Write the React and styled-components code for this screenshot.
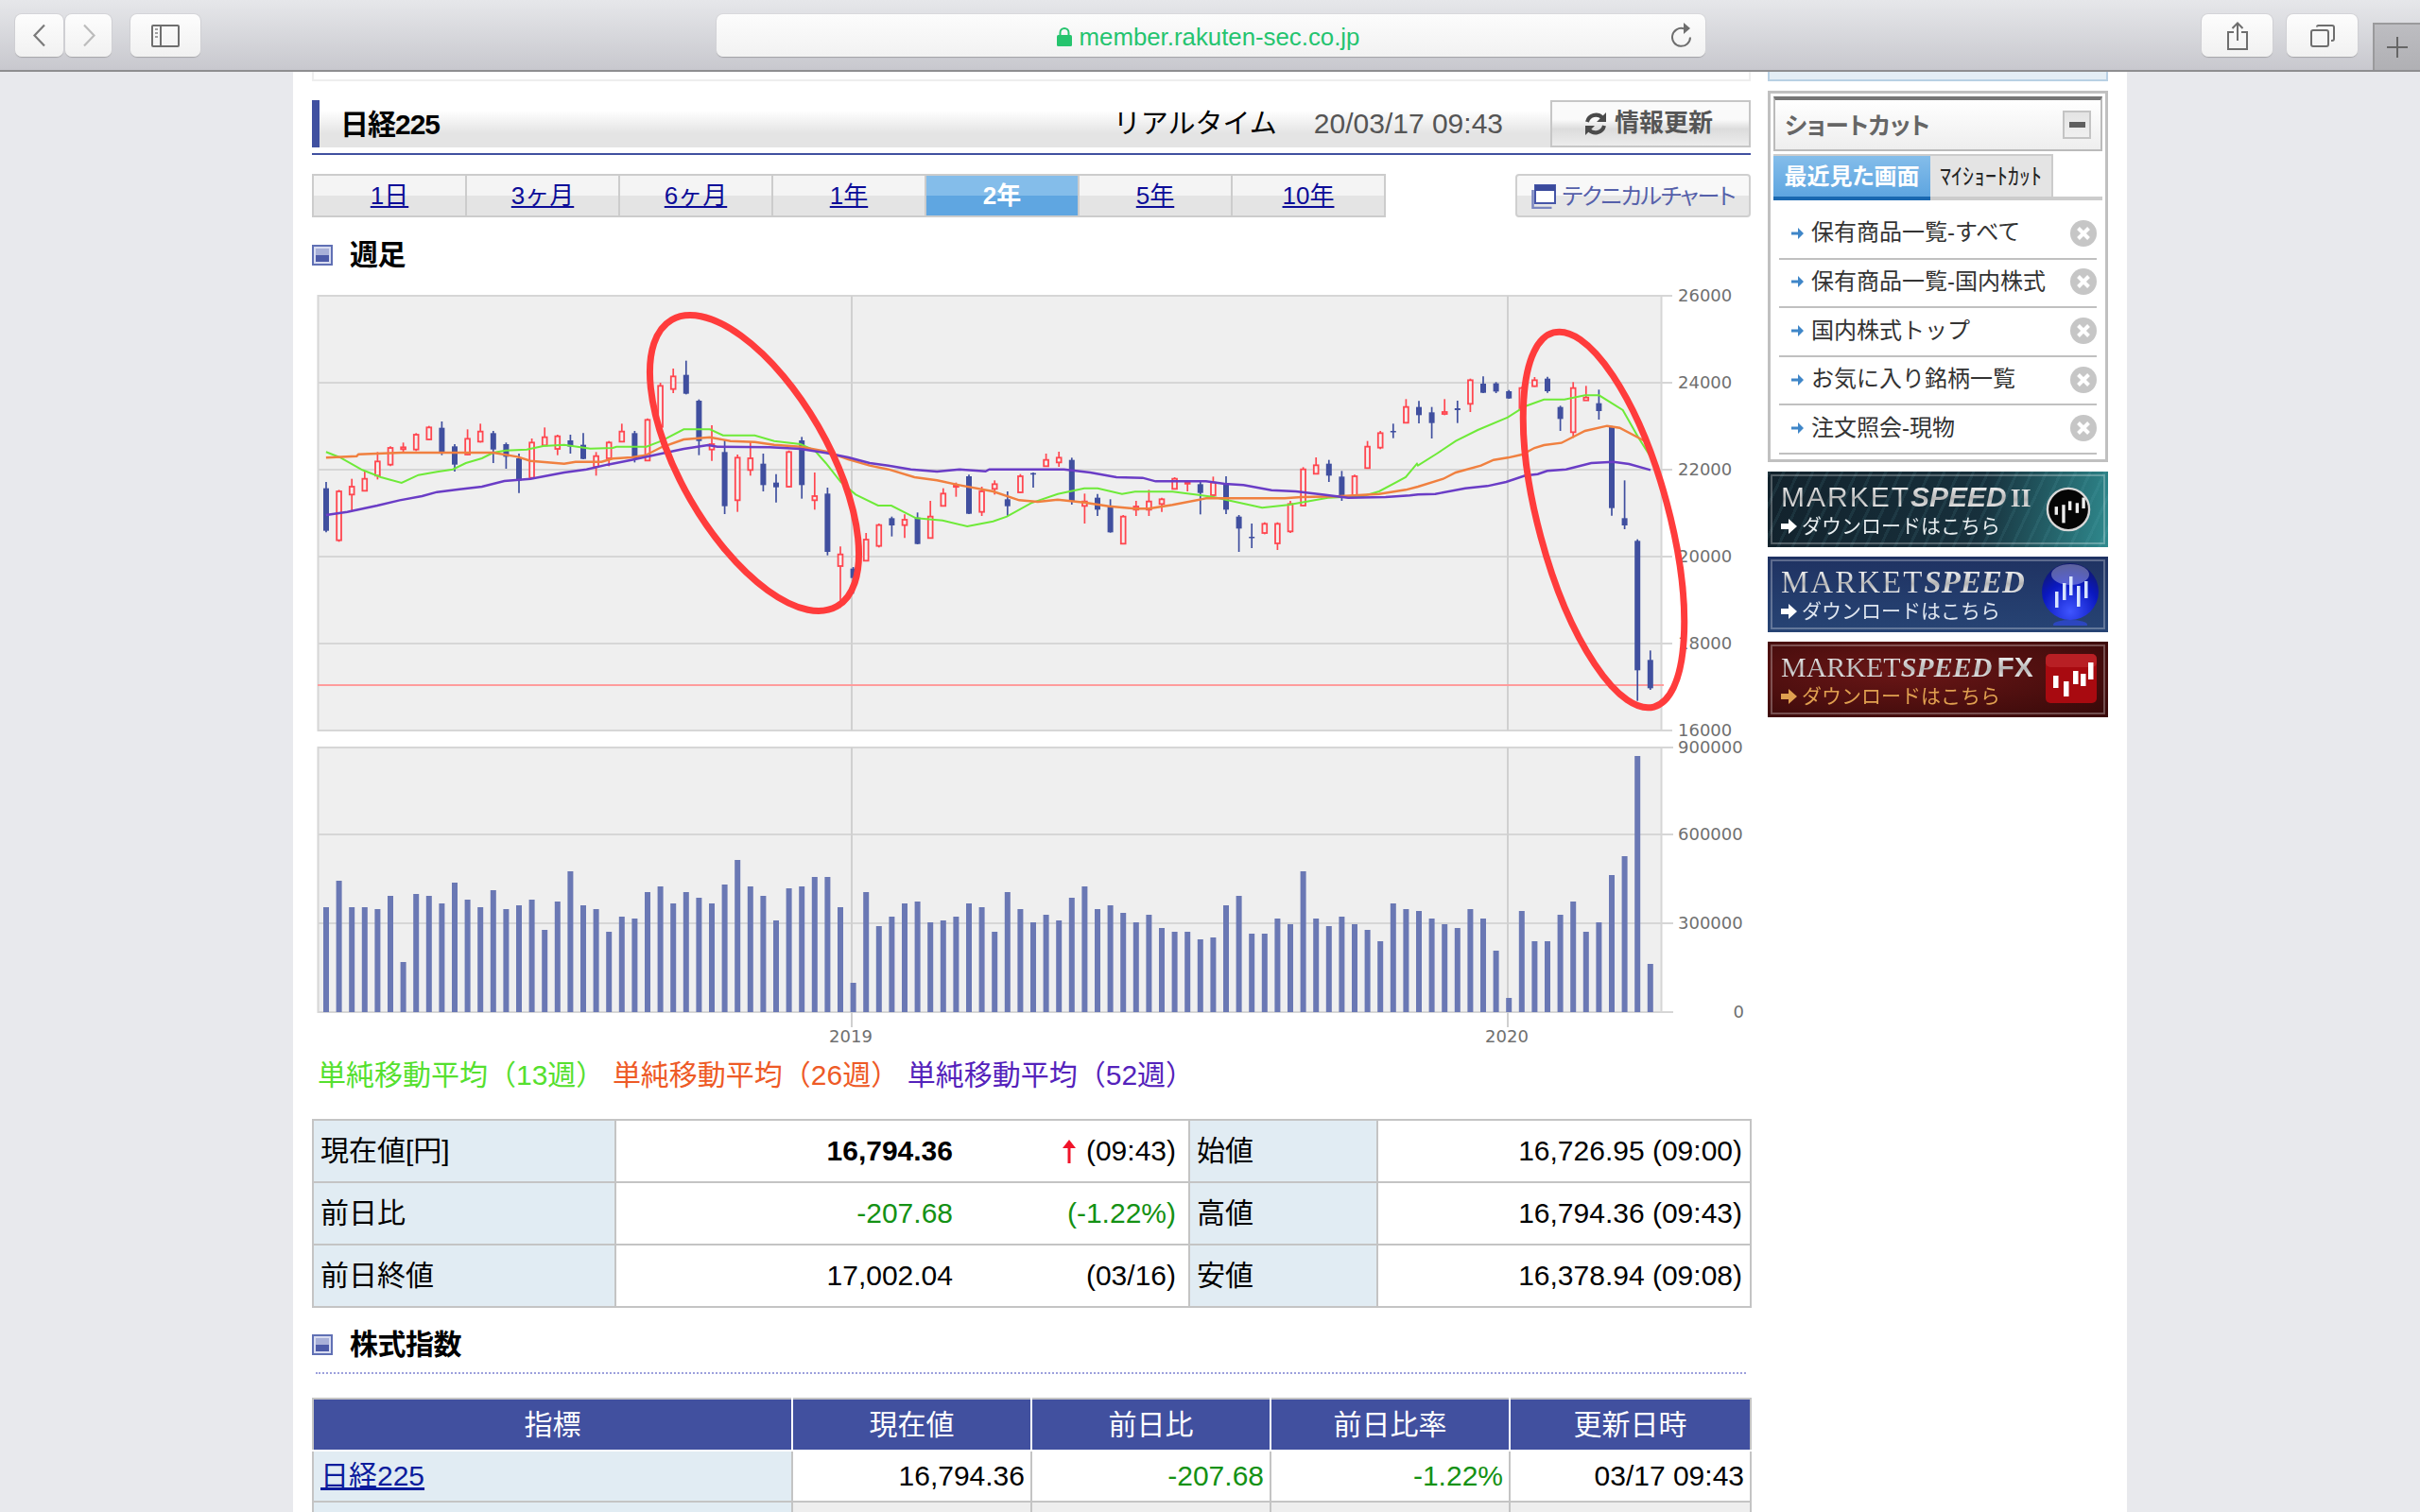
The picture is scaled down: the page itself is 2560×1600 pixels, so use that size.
import React from "react";
import styled, { createGlobalStyle } from "styled-components";

const SANS = `"Liberation Sans", "Noto Sans CJK JP", sans-serif`;

const Global = createGlobalStyle`
  html, body { margin: 0; padding: 0; height: 1600px; overflow: hidden; background: #e8e9ed; }
  body { font-family: ${SANS}; color: #000; line-height: 1.2; }
  * { box-sizing: border-box; }
`;

/* ---------- browser chrome ---------- */
const Toolbar = styled.header`
  height: 76px;
  display: grid;
  grid-template-columns: 758px 1046px 1fr;
  background: linear-gradient(#e6e7ea, #c8c8ce);
  border-bottom: 2px solid #8e8e90;
`;
const NavGroup = styled.div`
  display: flex;
  padding: 15px 0 0 16px;
  height: 60px;
`;
const ChromeButton = styled.button`
  width: ${(p) => p.$w}px;
  height: 45px;
  margin-left: ${(p) => p.$ml || 0}px;
  padding: 0;
  display: flex;
  align-items: center;
  justify-content: center;
  background: linear-gradient(#fdfdfd, #f1f1f1);
  border: 0;
  border-radius: 7px;
  box-shadow: 0 1px 1px #a5a5a8, 0 0 0 1px #d4d4d8;
`;
const AddressBar = styled.div`
  height: 45px;
  margin-top: 15px;
  display: grid;
  grid-template-columns: 1fr auto 1fr;
  align-items: center;
  padding-right: 12px;
  background: linear-gradient(#fcfcfc, #f2f2f2);
  border-radius: 7px;
  box-shadow: 0 1px 1px #a0a0a4, 0 0 0 1px #d8d8dc;
`;
const Url = styled.div`
  grid-column: 2;
  display: flex;
  align-items: center;
  gap: 8px;
  padding: 3px 0 0 6px;
  font-size: 25.8px;
  color: #24c46f;
  font-family: "Liberation Sans", sans-serif;
`;
const Reload = styled.div`
  justify-self: end;
  display: flex;
`;
const ChromeRight = styled.div`
  display: flex;
  padding: 15px 0 0 525px;
  height: 74px;
`;
const PlusTab = styled.div`
  width: 50px;
  height: 50px;
  margin: 9px 0 0 16px;
  display: flex;
  align-items: center;
  justify-content: center;
  background: linear-gradient(#bdbdc1, #b0b0b4);
  border-left: 2px solid #9a9a9c;
  border-top: 2px solid #9a9a9c;
`;

/* ---------- page frame ---------- */
const Sheet = styled.main`
  width: 1940px;
  height: 1524px;
  margin: 0 auto;
  padding: 0 20px;
  display: flex;
  gap: 18px;
  background: #fff;
  overflow: hidden;
`;
const MainColumn = styled.div`
  width: 1522px;
  flex: none;
`;
const SideColumn = styled.aside`
  width: 360px;
  flex: none;
`;
const TopStrip = styled.div`
  height: 10px;
  border: 2px solid #eee;
  border-top: 0;
`;

/* ---------- heading bar ---------- */
const TitleBar = styled.div`
  margin-top: 20px;
  height: 50px;
  display: flex;
  align-items: center;
  padding-left: 22px;
  border-left: 8px solid #4050a0;
  background: linear-gradient(#fff 22%, #e4e4e4 70%);
`;
const PageTitle = styled.h1`
  margin: 0;
  padding-top: 2px;
  font-size: 30px;
  font-weight: 700;
  letter-spacing: -1px;
`;
const Realtime = styled.span`
  margin-left: auto;
  font-size: 29px;
`;
const Stamp = styled.span`
  margin-left: 39px;
  font-size: 30px;
  color: #555;
`;
const UpdateButton = styled.button`
  width: 212px;
  height: 50px;
  margin-left: 50px;
  padding: 0 6px 0 0;
  display: flex;
  align-items: center;
  justify-content: center;
  gap: 6px;
  font: 700 26px/1.2 ${SANS};
  color: #555;
  border: 2px solid #c6c6c6;
  background: linear-gradient(#fafafa 40%, #dcdcdc 62%, #ececec);
`;
const TitleRule = styled.div`
  margin-top: 6px;
  height: 2px;
  background: #4050a0;
`;

/* ---------- period tabs ---------- */
const TabRow = styled.div`
  margin-top: 20px;
  display: flex;
  justify-content: space-between;
`;
const PeriodTabs = styled.nav`
  width: 1136px;
  height: 46px;
  display: flex;
  border: 2px solid #ccc;
`;
const PeriodTab = styled.a`
  flex: 1;
  display: flex;
  align-items: center;
  justify-content: center;
  padding-top: 2px;
  font-size: 26px;
  font-weight: ${(p) => (p.$active ? 700 : 400)};
  color: ${(p) => (p.$active ? "#fff" : "#0c0c98")};
  text-decoration: ${(p) => (p.$active ? "none" : "underline")};
  border-right: 2px solid #ccc;
  background: ${(p) =>
    p.$active
      ? "linear-gradient(#84bdea 50%, #5fa6e1 50%)"
      : "linear-gradient(#f4f4f4 50%, #e4e4e4 50%)"};
  &:last-child { border-right: 0; }
`;
const TechButton = styled.a`
  width: 249px;
  height: 46px;
  display: flex;
  align-items: center;
  justify-content: center;
  gap: 7px;
  padding-top: 2px;
  font-size: 24px;
  font-feature-settings: "palt";
  letter-spacing: -1.2px;
  color: #5560aa;
  border: 2px solid #cfcfcf;
  border-radius: 4px;
  background: linear-gradient(#f8f8f8 50%, #e6e6e6 50%);
`;

/* ---------- section heading ---------- */
const Section = styled.div`
  display: flex;
  align-items: center;
  gap: 18px;
  height: ${(p) => p.$h}px;
  margin-top: ${(p) => p.$mt}px;
`;
const SectionMark = styled.i`
  width: 22px;
  height: 22px;
  flex: none;
  border: 2px solid #6070b4;
  box-shadow: inset 0 0 0 2px #d8dcf0;
  background: linear-gradient(#a8b0d8 50%, #4c5aa8 50%);
`;
const SectionTitle = styled.h2`
  margin: 0;
  font-size: 30px;
  font-weight: 700;
  letter-spacing: -0.5px;
`;

/* ---------- chart ---------- */
const ChartSvg = styled.svg`
  display: block;
  width: 1522px;
  height: 810px;
  margin-top: 10px;
`;
const Legend = styled.div`
  height: 50px;
  padding: 5px 0 0 6px;
  display: flex;
  align-items: center;
  gap: 8.5px;
  font-size: 30px;
`;
const LegendItem = styled.span`
  color: ${(p) => p.$c};
`;

/* ---------- quote table ---------- */
const QuoteTable = styled.table`
  width: 1521px;
  margin-top: 24px;
  table-layout: fixed;
  border-collapse: collapse;
  font-size: 30px;
`;
const Cell = styled.td`
  height: 66px;
  padding: 0 8px 0 7px;
  border: 2px solid #c4c4c4;
  text-align: ${(p) => (p.$label ? "left" : "right")};
  background: ${(p) => (p.$label ? "#e1ecf3" : "#fff")};
  color: ${(p) => (p.$green ? "#149114" : "#000")};
`;
const PairCell = styled(Cell)`
  padding: 0 13px 0 0;
`;
const Pair = styled.div`
  display: flex;
  justify-content: flex-end;
  align-items: center;
`;
const PairMain = styled.span`
  font-weight: ${(p) => (p.$bold ? 700 : 400)};
`;
const PairSide = styled.span`
  width: 236px;
  display: flex;
  align-items: center;
  justify-content: flex-end;
  gap: 11px;
`;
const DottedRule = styled.div`
  margin: 9px 5px 0 4px;
  border-top: 2px dotted #9ca0dc;
`;
const IndexTable = styled.table`
  width: 1521px;
  margin-top: 25px;
  table-layout: fixed;
  border-collapse: collapse;
  font-size: 30px;
`;
const HeadCell = styled.th`
  height: 55px;
  padding: 0;
  font-weight: 400;
  color: #fff;
  background: #41509f;
  border: 2px solid #fff;
  border-top-color: #c4c4c4;
  &:first-child { border-left-color: #c4c4c4; }
  &:last-child { border-right-color: #c4c4c4; }
`;
const IndexCell = styled.td`
  height: 54px;
  padding: 0 6px 0 7px;
  border: 2px solid #c4c4c4;
  text-align: ${(p) => (p.$label ? "left" : "right")};
  background: ${(p) => (p.$label ? "#e1ecf3" : p.$alt ? "#eee" : "#fff")};
  color: ${(p) => (p.$green ? "#149114" : "#000")};
`;
const IndexLink = styled.a`
  color: #0c1c9c;
  text-decoration: underline;
`;

/* ---------- sidebar ---------- */
const SideStrip = styled.div`
  height: 10px;
  background: #e4eef5;
  border: 2px solid #b8d0e4;
  border-top: 0;
`;
const ShortcutBox = styled.section`
  margin-top: 10px;
  height: 393px;
  padding: 3px;
  border: 3px solid #c0c0c0;
`;
const ShortcutHead = styled.div`
  height: 58px;
  display: flex;
  align-items: center;
  justify-content: space-between;
  padding: 0 10px;
  border: 2px solid #bbb;
  border-top: 4px solid #777;
  background: linear-gradient(#fff, #eee);
`;
const ShortcutTitle = styled.h3`
  margin: 0;
  padding-top: 2px;
  font-size: 25px;
  font-weight: 700;
  color: #666;
  font-feature-settings: "palt";
`;
const Minimize = styled.button`
  width: 30px;
  height: 30px;
  padding: 0;
  display: flex;
  align-items: center;
  justify-content: center;
  border: 2px solid #c4c4c4;
  background: linear-gradient(#e4e4e4, #f0f0f0);
  &::before {
    content: "";
    width: 17px;
    height: 6px;
    background: #5f5f5f;
  }
`;
const ShortTabs = styled.div`
  margin-top: 3px;
  display: flex;
  height: 49px;
  border-bottom: 4px solid #ccc;
`;
const ShortTab = styled.div`
  width: ${(p) => p.$w}px;
  height: 49px;
  flex: none;
  display: flex;
  align-items: center;
  justify-content: center;
  white-space: nowrap;
  font-feature-settings: "palt";
  font-size: 24px;
  font-weight: ${(p) => (p.$active ? 700 : 400)};
  padding-top: 1px;
  color: ${(p) => (p.$active ? "#fff" : "#222")};
  background: ${(p) => (p.$active ? "linear-gradient(#84bdea, #5ea5e0)" : "#e4e4e4")};
  border-bottom: 4px solid ${(p) => (p.$active ? "#1a68b0" : "#ccc")};
  border-top: 2px solid #ccc;
  border-right: ${(p) => (p.$active ? 0 : "2px solid #ccc")};
`;
const ShortList = styled.ul`
  list-style: none;
  margin: 11px 0 0;
  padding: 0 6px;
`;
const ShortItem = styled.li`
  height: 51.6px;
  display: flex;
  align-items: center;
  gap: 8px;
  padding: 0 0 2px 13px;
  font-size: 24px;
  color: #333;
  border-bottom: 2px solid #c0c0c0;
`;
const ShortText = styled.span`
  flex: 1;
  white-space: nowrap;
`;

/* ---------- banners ---------- */
const Banner = styled.a`
  position: relative;
  display: flex;
  height: 80px;
  margin-top: 10px;
  padding: 0 ${(p) => p.$pr}px 0 14px;
  justify-content: space-between;
  align-items: center;
  background: ${(p) => p.$bg};
  overflow: hidden;
  &::after {
    content: "";
    position: absolute;
    inset: 3px;
    border: 2px solid rgba(255, 255, 255, 0.28);
  }
`;
const BannerText = styled.div`
  display: flex;
  flex-direction: column;
  filter: blur(0.4px);
`;
const BannerName = styled.div`
  display: flex;
  align-items: baseline;
  white-space: nowrap;
  height: 36px;
  padding-top: 2px;
  line-height: 36px;
`;
const NameWord = styled.span`
  font-family: ${(p) => (p.$serif ? '"Liberation Serif", serif' : '"Liberation Sans", sans-serif')};
  font-size: ${(p) => p.$size}px;
  font-weight: ${(p) => (p.$bold ? 700 : 400)};
  font-style: ${(p) => (p.$italic ? "italic" : "normal")};
  letter-spacing: ${(p) => p.$ls || 0}px;
  margin-left: ${(p) => p.$ml || 0}px;
  color: transparent;
  background: linear-gradient(#fff 10%, #b4b4b4 55%, #f0f0f0 85%);
  -webkit-background-clip: text;
  background-clip: text;
`;
const BannerCta = styled.div`
  display: flex;
  align-items: center;
  gap: 5px;
  height: 30px;
  font-size: 21px;
  color: ${(p) => p.$c};
  white-space: nowrap;
`;

/* ---------- chart data (reference pixels) ---------- */
// colour, wick top, body top, body bottom, wick bottom; y values are 3x offsets from y=300
const candles = [
  ["B",630,650,785,790],["R",655,660,815,820],["R",620,645,670,720],["R",595,620,658,658],["R",535,565,610,622],
  ["R",517,522,575,580],["R",505,520,526,535],["R",475,480,527,532],["R",452,457,495,497],["B",438,458,535,545],
  ["B",510,517,575,597],["R",463,493,543,545],["R",445,470,502,505],["B",468,475,527,570],["B",505,510,550,588],
  ["B",540,555,625,665],["R",492,505,617,620],["R",457,488,514,516],["R",480,485,525,545],["B",480,498,518,540],
  ["B",475,512,557,558],["R",535,548,582,610],["R",500,505,555,580],["R",445,470,502,503],["B",468,475,555,568],
  ["R",428,433,562,563],["R",315,325,455,458],["R",270,295,335,348],["B",245,290,350,352],["B",368,372,500,545],
  ["R",450,510,527,563],["B",497,535,707,732],["R",543,553,688,725],["R",503,555,592,610],["B",540,572,640,660],
  ["B",605,632,647,695],["R",530,535,645,648],["B",487,498,640,683],["R",600,675,688,718],["B",648,667,852,863],
  ["R",835,860,897,1030],["B",900,905,935,985],["R",792,813,880,882],["R",762,767,833,838],["B",740,745,768,803],
  ["R",733,750,767,808],["B",727,743,827,828],["R",690,740,808,810],["R",650,667,706,708],["R",632,641,645,677],
  ["B",607,612,731,732],["R",645,660,725,738],["R",625,637,652,670],["B",660,685,707,738],["R",605,612,663,665],
  ["B",600,602,606,648],["R",540,560,580,581],["R",534,553,568,582],["B",553,560,690,702],["R",667,692,706,762],
  ["B",668,680,718,738],["B",685,705,790,791],["R",735,740,826,828],["R",690,708,718,738],["R",655,692,718,738],
  ["R",680,685,700,725],["R",615,620,652,653],["R",628,631,634,660],["B",628,637,665,733],["R",613,632,672,673],
  ["B",612,637,718,732],["B",735,740,778,852],["B",762,804,807,840],["R",758,763,792,796],["R",758,763,825,846],
  ["R",690,700,787,792],["R",583,590,705,707],["R",552,577,604,606],["B",560,572,610,630],["B",595,613,675,690],
  ["R",607,612,672,675],["R",500,518,586,588],["R",468,475,521,526],["B",445,468,472,491],["R",367,392,442,444],
  ["B",373,392,418,444],["B",392,409,443,492],["R",367,408,414,418],["B",372,396,402,443],["R",302,307,382,408],
  ["B",295,318,347,348],["B",313,317,343,348],["B",338,342,365,366],["R",328,332,400,405],["R",297,307,326,328],
  ["B",296,302,342,347],["B",388,392,430,468],["R",313,332,472,490],["R",325,362,371,372],["B",337,380,405,432],
  ["B",452,453,713,737],["B",625,745,768,780],["B",812,817,1228,1325],["B",1165,1195,1285,1290],
];
const volumes = [
  540,456,540,540,546,504,714,498,504,528,462,516,540,486,546,534,516,612,522,426,534,546,618,570,576,492,474,528,492,510,
  528,468,390,474,504,582,480,474,444,444,540,780,492,600,570,528,522,588,582,570,528,540,618,492,546,588,564,582,
  510,474,546,534,558,588,564,606,618,618,642,636,534,504,624,624,576,594,426,576,600,570,594,612,648,528,546,552,576,594,606,
  546,576,678,828,552,648,648,564,522,618,588,438,378,60,720,
];
const seg = (pts, ox, s) => pts.map(([x, y]) => `${(ox + x / s).toFixed(1)},${(300 + y / 3).toFixed(1)}`);
const Z = 2.529;
const green = [
  ...seg([[63,535],[100,552],[160,592],[210,615],[265,633],[310,608],[360,598],[402,590],[437,570],[480,555],[510,537],[543,530],[600,527],[644,516],[700,512],[770,524],[830,522],[840,518],[920,518],[960,500],[1020,463],[1090,463],[1125,482],[1210,482],[1262,500],[1332,510],[1370,530],[1400,570],[1440,630],[1480,670],[1540,705]],320,Z),
  ...seg([[58,705],[124,745],[195,752],[261,771],[330,755],[367,740],[432,697],[503,668],[574,650],[610,650],[675,668],[710,661],[810,661],[840,665],[917,677],[1050,712],[1120,703],[1155,695],[1226,680],[1320,675],[1363,660],[1434,615],[1464,572]],920,Z),
  ...seg([[0,578],[60,540],[120,500],[190,465],[285,425],[340,390],[400,368],[465,368],[530,355],[575,355],[650,402],[700,490],[738,550]],1500,3),
];
const orange = [
  ...seg([[63,553],[145,548],[150,542],[265,537],[510,537],[575,550],[610,563],[700,572],[730,566],[800,566],[830,556],[880,552],[918,545],[960,520],[1020,495],[1090,488],[1145,500],[1210,503],[1262,512],[1332,518],[1400,533],[1460,558]],320,Z),
  ...seg([[0,578],[50,590],[120,615],[180,625],[240,640],[330,660],[400,688],[450,693],[503,686],[574,695],[640,707],[710,715],[746,715],[810,703],[900,682],[1110,682],[1155,678],[1250,676],[1363,668],[1434,655]],920,Z),
  ...seg([[0,645],[80,620],[120,600],[200,578],[240,560],[285,553],[330,543],[370,522],[400,513],[455,506],[530,468],[600,452],[640,458],[720,500]],1500,3),
];
const purple = [
  ...seg([[63,735],[120,725],[200,705],[260,688],[320,675],[360,662],[420,653],[480,645],[540,627],[610,620],[700,600],[760,590],[816,575],[880,560],[960,540],[1020,525],[1085,513],[1110,518],[1250,520],[1332,525],[1400,538],[1460,552]],320,Z),
  ...seg([[0,570],[50,578],[110,590],[180,597],[240,590],[310,596],[320,590],[520,590],[590,600],[660,615],[730,617],[765,628],[900,628],[950,636],[1000,640],[1075,656],[1140,660],[1210,670],[1280,680],[1380,678],[1445,673]],920,Z),
  ...seg([[0,670],[55,668],[150,650],[220,643],[280,630],[340,610],[380,605],[410,595],[470,590],[550,570],[620,566],[670,573],[738,592]],1500,3),
];

const AXIS = { fontFamily: '"DejaVu Sans", sans-serif', fontSize: 18, fill: "#707070" };
const GRID = "#d6d6d6";
const cx = (i) => 345 + i * 13.6;
const yy = (z) => 300 + z / 3;

function Chart() {
  return (
    <ChartSvg viewBox="330 300 1522 810">
      <defs>
        <filter id="soft" x="-2%" y="-2%" width="104%" height="104%">
          <feGaussianBlur stdDeviation="0.55" />
        </filter>
      </defs>
      <g filter="url(#soft)">
        <rect x="336.5" y="313" width="1421" height="460" fill="#efefef" stroke={GRID} strokeWidth="2" />
        {[313, 405, 497, 589, 681, 773].map((y) => (
          <line key={y} x1="336" x2="1769" y1={y} y2={y} stroke={GRID} strokeWidth="2" />
        ))}
        {[901, 1595].map((x) => (
          <line key={x} x1={x} x2={x} y1="313" y2="773" stroke="#d0d0d0" strokeWidth="2" />
        ))}
        <line x1="336" x2="1760" y1="725" y2="725" stroke="#ff9c9c" strokeWidth="2" />
        {candles.map(([c, wt, bt, bb, wb], i) => {
          const x = cx(i);
          const col = c === "R" ? "#ff4650" : "#3f4f9f";
          return (
            <g key={i}>
              <line x1={x} x2={x} y1={yy(wt)} y2={yy(wb)} stroke={col} strokeWidth="1.7" />
              {c === "R" ? (
                <rect x={x - 2.4} y={yy(bt)} width="4.8" height={Math.max(1.5, (bb - bt) / 3)} fill="#f4f0f0" stroke={col} strokeWidth="1.8" />
              ) : (
                <rect x={x - 3} y={yy(bt)} width="6" height={Math.max(1.5, (bb - bt) / 3)} fill={col} />
              )}
            </g>
          );
        })}
        <polyline points={green.join(" ")} fill="none" stroke="#6eea38" strokeWidth="2" />
        <polyline points={orange.join(" ")} fill="none" stroke="#f0803f" strokeWidth="2.4" />
        <polyline points={purple.join(" ")} fill="none" stroke="#6a3cc6" strokeWidth="2.4" />

        <rect x="336.5" y="791" width="1421" height="280" fill="#efefef" stroke={GRID} strokeWidth="2" />
        {[791, 883, 977, 1071].map((y) => (
          <line key={y} x1="336" x2="1770" y1={y} y2={y} stroke={GRID} strokeWidth="2" />
        ))}
        {[901, 1595].map((x) => (
          <line key={x} x1={x} x2={x} y1="791" y2="1087" stroke="#d0d0d0" strokeWidth="2" />
        ))}
        {volumes.map((t, i) => {
          const top = 780 + t / 3;
          return <rect key={i} x={cx(i) - 3} y={top} width="6" height={1071 - top} fill="#6b78b4" />;
        })}
      </g>
      {["26000", "24000", "22000", "20000", "18000", "16000"].map((t, i) => (
        <text key={t} x="1775" y={319 + i * 92} {...AXIS}>{t}</text>
      ))}
      {[["900000", 797], ["600000", 889], ["300000", 983]].map(([t, y]) => (
        <text key={t} x="1775" y={y} {...AXIS}>{t}</text>
      ))}
      <text x="1845" y="1077" textAnchor="end" {...AXIS}>0</text>
      <text x="900" y="1103" textAnchor="middle" {...AXIS}>2019</text>
      <text x="1594" y="1103" textAnchor="middle" {...AXIS}>2020</text>
      <ellipse cx="798" cy="490" rx="175" ry="78" transform="rotate(60 798 490)" fill="none" stroke="#ff3c3c" strokeWidth="7" />
      <ellipse cx="1696.5" cy="550" rx="205" ry="69" transform="rotate(75 1696.5 550)" fill="none" stroke="#ff3c3c" strokeWidth="7" />
    </ChartSvg>
  );
}

/* ---------- icons ---------- */
const Chevron = ({ dir, color }) => (
  <svg width="16" height="25" viewBox="0 0 16 25">
    <path d={dir === "left" ? "M13 1.5 2.5 12.5 13 23.5" : "M3 1.5 13.5 12.5 3 23.5"} fill="none" stroke={color} strokeWidth="2.2" />
  </svg>
);
const SidebarIcon = () => (
  <svg width="30" height="24" viewBox="0 0 30 24">
    <rect x="1" y="1" width="28" height="22" rx="1" fill="none" stroke="#6e6e6e" strokeWidth="2" />
    <line x1="10" x2="10" y1="1" y2="23" stroke="#6e6e6e" strokeWidth="2" />
    <path d="M4 5h3M4 9h3M4 13h3" stroke="#a0a0a0" strokeWidth="2" />
  </svg>
);
const Lock = () => (
  <svg width="16" height="20" viewBox="0 0 16 20">
    <path d="M3.5 9V5.5a4.5 4.5 0 0 1 9 0V9" fill="none" stroke="#26c46e" strokeWidth="2" />
    <rect x="0" y="8" width="16" height="12" rx="1.5" fill="#26c46e" />
  </svg>
);
const ReloadIcon = () => (
  <svg width="24" height="27" viewBox="0 0 24 27">
    <path d="M14 6.2A9.5 9.5 0 1 0 21 15.5" fill="none" stroke="#6e6e6e" strokeWidth="2" transform="translate(-1 0)" />
    <path d="M13 0v12l7-6z" fill="#6e6e6e" />
  </svg>
);
const ShareIcon = () => (
  <svg width="24" height="30" viewBox="0 0 24 30">
    <path d="M8 11H2v18h20V11h-6" fill="none" stroke="#6e6e6e" strokeWidth="2" />
    <path d="M12 20V2M6.5 7 12 1.5 17.5 7" fill="none" stroke="#6e6e6e" strokeWidth="2" />
  </svg>
);
const TabsIcon = () => (
  <svg width="26" height="24" viewBox="0 0 26 24">
    <rect x="1" y="6" width="18" height="17" rx="2" fill="none" stroke="#6e6e6e" strokeWidth="2" />
    <path d="M7 2.5A1.5 1.5 0 0 1 8.5 1H23a2 2 0 0 1 2 2v12a2 2 0 0 1-2 2h-1" fill="none" stroke="#6e6e6e" strokeWidth="2" />
  </svg>
);
const PlusIcon = () => (
  <svg width="24" height="24" viewBox="0 0 24 24">
    <path d="M12 1v22M1 12h22" stroke="#666" strokeWidth="2" />
  </svg>
);
const RefreshIcon = () => (
  <svg width="28" height="28" viewBox="0 0 28 28">
    <path d="M5 12A9.5 9.5 0 0 1 21 7.5" fill="none" stroke="#4a4a4a" strokeWidth="4" />
    <path d="M23 16A9.5 9.5 0 0 1 7 20.5" fill="none" stroke="#4a4a4a" strokeWidth="4" />
    <path d="M25 2v10H15zM3 26V16h10z" fill="#4a4a4a" />
  </svg>
);
const TechIcon = () => (
  <svg width="26" height="26" viewBox="0 0 26 26">
    <rect x="4" y="1" width="21" height="19" fill="#fff" stroke="#4656a8" strokeWidth="2" />
    <rect x="4" y="1" width="21" height="6" fill="#3a4a9c" />
    <path d="M1.5 6v19h20" fill="none" stroke="#7a86c0" strokeWidth="2.5" />
  </svg>
);
const UpArrow = () => (
  <svg width="14" height="25" viewBox="0 0 14 25">
    <path d="M7 0 14 9H8.5v16h-3V9H0z" fill="#f0142a" />
  </svg>
);
const LinkArrow = () => (
  <svg width="13" height="12" viewBox="0 0 13 12">
    <path d="M0 4.6h7V0l6 6-6 6V7.4H0z" fill="#3f86c8" />
  </svg>
);
const CloseIcon = () => (
  <svg width="28" height="28" viewBox="0 0 28 28">
    <circle cx="14" cy="14" r="14" fill="#c6c6c6" />
    <path d="M8.5 8.5l11 11M19.5 8.5l-11 11" stroke="#fff" strokeWidth="4" />
  </svg>
);
const CtaArrow = ({ c }) => (
  <svg width="17" height="16" viewBox="0 0 17 16">
    <path d="M0 5h8V0l9 8-9 8v-5H0z" fill={c} />
  </svg>
);
const bars = (xs, color, w) =>
  xs.map(([x, y, h], i) => <rect key={i} x={x} y={y} width={w} height={h} fill={color} />);
const SpeedTwoIcon = () => (
  <svg width="48" height="48" viewBox="0 0 50 50">
    <circle cx="25" cy="25" r="23" fill="#050505" stroke="#d8d8d8" strokeWidth="2.5" />
    {bars([[10, 22, 9], [18, 20, 20], [25, 16, 10], [33, 18, 11], [40, 12, 12]], "#eee", 3.5)}
  </svg>
);
const SpeedOneIcon = () => (
  <svg width="60" height="66" viewBox="0 0 60 66">
    <defs>
      <radialGradient id="orb" cx="50%" cy="85%" r="85%">
        <stop offset="0" stopColor="#3f55ff" />
        <stop offset="0.6" stopColor="#0a18c0" />
        <stop offset="1" stopColor="#10186a" />
      </radialGradient>
    </defs>
    <circle cx="30" cy="30" r="30" fill="url(#orb)" />
    <ellipse cx="30" cy="12" rx="20" ry="11" fill="#fff" opacity="0.32" />
    <ellipse cx="30" cy="65" rx="18" ry="5" fill="#2f49e0" opacity="0.7" />
    {bars([[14, 30, 17], [22, 21, 18], [29, 14, 20], [37, 24, 22], [45, 19, 18]], "#d8e4ff", 3.5)}
  </svg>
);
const SpeedFxIcon = () => (
  <svg width="54" height="56" viewBox="0 0 54 56">
    <rect x="0" y="1" width="54" height="52" rx="5" fill="#a80a10" />
    <rect x="0" y="1" width="54" height="14" rx="5" fill="#c83438" opacity="0.5" />
    {bars([[8, 24, 13], [19, 30, 16], [29, 19, 14], [37, 22, 13], [45, 10, 18]], "#fff", 5.5)}
  </svg>
);

/* ---------- data ---------- */
const periods = ["1日", "3ヶ月", "6ヶ月", "1年", "2年", "5年", "10年"];
const shortcuts = ["保有商品一覧-すべて", "保有商品一覧-国内株式", "国内株式トップ", "お気に入り銘柄一覧", "注文照会-現物"];

export default function App() {
  return (
    <>
      <Global />
      <Toolbar>
        <NavGroup>
          <ChromeButton $w={51}><Chevron dir="left" color="#7a7a7a" /></ChromeButton>
          <ChromeButton $w={49} $ml={2}><Chevron dir="right" color="#bcbcbc" /></ChromeButton>
          <ChromeButton $w={74} $ml={20}><SidebarIcon /></ChromeButton>
        </NavGroup>
        <AddressBar>
          <Url><Lock />member.rakuten-sec.co.jp</Url>
          <Reload><ReloadIcon /></Reload>
        </AddressBar>
        <ChromeRight>
          <ChromeButton $w={75}><ShareIcon /></ChromeButton>
          <ChromeButton $w={75} $ml={15}><TabsIcon /></ChromeButton>
          <PlusTab><PlusIcon /></PlusTab>
        </ChromeRight>
      </Toolbar>
      <Sheet>
        <MainColumn>
          <TopStrip />
          <TitleBar>
            <PageTitle>日経225</PageTitle>
            <Realtime>リアルタイム</Realtime>
            <Stamp>20/03/17 09:43</Stamp>
            <UpdateButton><RefreshIcon />情報更新</UpdateButton>
          </TitleBar>
          <TitleRule />
          <TabRow>
            <PeriodTabs>
              {periods.map((p) => (
                <PeriodTab key={p} $active={p === "2年"}>{p}</PeriodTab>
              ))}
            </PeriodTabs>
            <TechButton><TechIcon />テクニカルチャート</TechButton>
          </TabRow>
          <Section $h={40} $mt={20}>
            <SectionMark />
            <SectionTitle>週足</SectionTitle>
          </Section>
          <Chart />
          <Legend>
            <LegendItem $c="#55e02f">単純移動平均（13週）</LegendItem>
            <LegendItem $c="#ee5a26">単純移動平均（26週）</LegendItem>
            <LegendItem $c="#5422bb">単純移動平均（52週）</LegendItem>
          </Legend>
          <QuoteTable>
            <colgroup>
              <col width="320" /><col width="607" /><col width="199" /><col width="395" />
            </colgroup>
            <tbody>
              <tr>
                <Cell $label>現在値[円]</Cell>
                <PairCell>
                  <Pair>
                    <PairMain $bold>16,794.36</PairMain>
                    <PairSide><UpArrow />(09:43)</PairSide>
                  </Pair>
                </PairCell>
                <Cell $label>始値</Cell>
                <Cell>16,726.95 (09:00)</Cell>
              </tr>
              <tr>
                <Cell $label>前日比</Cell>
                <PairCell $green>
                  <Pair>
                    <PairMain>-207.68</PairMain>
                    <PairSide>(-1.22%)</PairSide>
                  </Pair>
                </PairCell>
                <Cell $label>高値</Cell>
                <Cell>16,794.36 (09:43)</Cell>
              </tr>
              <tr>
                <Cell $label>前日終値</Cell>
                <PairCell>
                  <Pair>
                    <PairMain>17,002.04</PairMain>
                    <PairSide>(03/16)</PairSide>
                  </Pair>
                </PairCell>
                <Cell $label>安値</Cell>
                <Cell>16,378.94 (09:08)</Cell>
              </tr>
            </tbody>
          </QuoteTable>
          <Section $h={40} $mt={19}>
            <SectionMark />
            <SectionTitle>株式指数</SectionTitle>
          </Section>
          <DottedRule />
          <IndexTable>
            <colgroup>
              <col width="507" /><col width="253" /><col width="253" /><col width="253" /><col width="255" />
            </colgroup>
            <thead>
              <tr>
                <HeadCell>指標</HeadCell>
                <HeadCell>現在値</HeadCell>
                <HeadCell>前日比</HeadCell>
                <HeadCell>前日比率</HeadCell>
                <HeadCell>更新日時</HeadCell>
              </tr>
            </thead>
            <tbody>
              <tr>
                <IndexCell $label><IndexLink>日経225</IndexLink></IndexCell>
                <IndexCell>16,794.36</IndexCell>
                <IndexCell $green>-207.68</IndexCell>
                <IndexCell $green>-1.22%</IndexCell>
                <IndexCell>03/17 09:43</IndexCell>
              </tr>
              <tr>
                <IndexCell $label />
                <IndexCell $alt />
                <IndexCell $alt />
                <IndexCell $alt />
                <IndexCell $alt />
              </tr>
            </tbody>
          </IndexTable>
        </MainColumn>
        <SideColumn>
          <SideStrip />
          <ShortcutBox>
            <ShortcutHead>
              <ShortcutTitle>ショートカット</ShortcutTitle>
              <Minimize />
            </ShortcutHead>
            <ShortTabs>
              <ShortTab $active $w={166}>最近見た画面</ShortTab>
              <ShortTab $w={130}>ﾏｲｼｮｰﾄｶｯﾄ</ShortTab>
            </ShortTabs>
            <ShortList>
              {shortcuts.map((s) => (
                <ShortItem key={s}>
                  <LinkArrow />
                  <ShortText>{s}</ShortText>
                  <CloseIcon />
                </ShortItem>
              ))}
            </ShortList>
          </ShortcutBox>
          <Banner $pr={18} $bg="repeating-linear-gradient(115deg, rgba(120,200,210,0.09) 0 3px, rgba(0,0,0,0) 3px 14px), linear-gradient(100deg, #12222c, #17303c 62%, #2f8a8e)">
            <BannerText>
              <BannerName>
                <NameWord $size={30} $ls={2}>MARKET</NameWord>
                <NameWord $size={30} $bold $italic>SPEED</NameWord>
                <NameWord $size={28} $serif $bold $ml={4}>II</NameWord>
              </BannerName>
              <BannerCta $c="#e8eef0"><CtaArrow c="#fff" />ダウンロードはこちら</BannerCta>
            </BannerText>
            <SpeedTwoIcon />
          </Banner>
          <Banner $pr={10} $bg="linear-gradient(#1f3262, #274474)">
            <BannerText>
              <BannerName>
                <NameWord $size={33} $serif $ls={2}>MARKET</NameWord>
                <NameWord $size={33} $serif $bold $italic>SPEED</NameWord>
              </BannerName>
              <BannerCta $c="#dfe6f0"><CtaArrow c="#fff" />ダウンロードはこちら</BannerCta>
            </BannerText>
            <SpeedOneIcon />
          </Banner>
          <Banner $pr={12} $bg="radial-gradient(ellipse at 40% 40%, #6a1616, #3a0a0a 90%)">
            <BannerText>
              <BannerName>
                <NameWord $size={30} $serif>MARKET</NameWord>
                <NameWord $size={30} $serif $bold $italic>SPEED</NameWord>
                <NameWord $size={30} $bold $ml={5}>FX</NameWord>
              </BannerName>
              <BannerCta $c="#e0a050"><CtaArrow c="#e0a050" />ダウンロードはこちら</BannerCta>
            </BannerText>
            <SpeedFxIcon />
          </Banner>
        </SideColumn>
      </Sheet>
    </>
  );
}
